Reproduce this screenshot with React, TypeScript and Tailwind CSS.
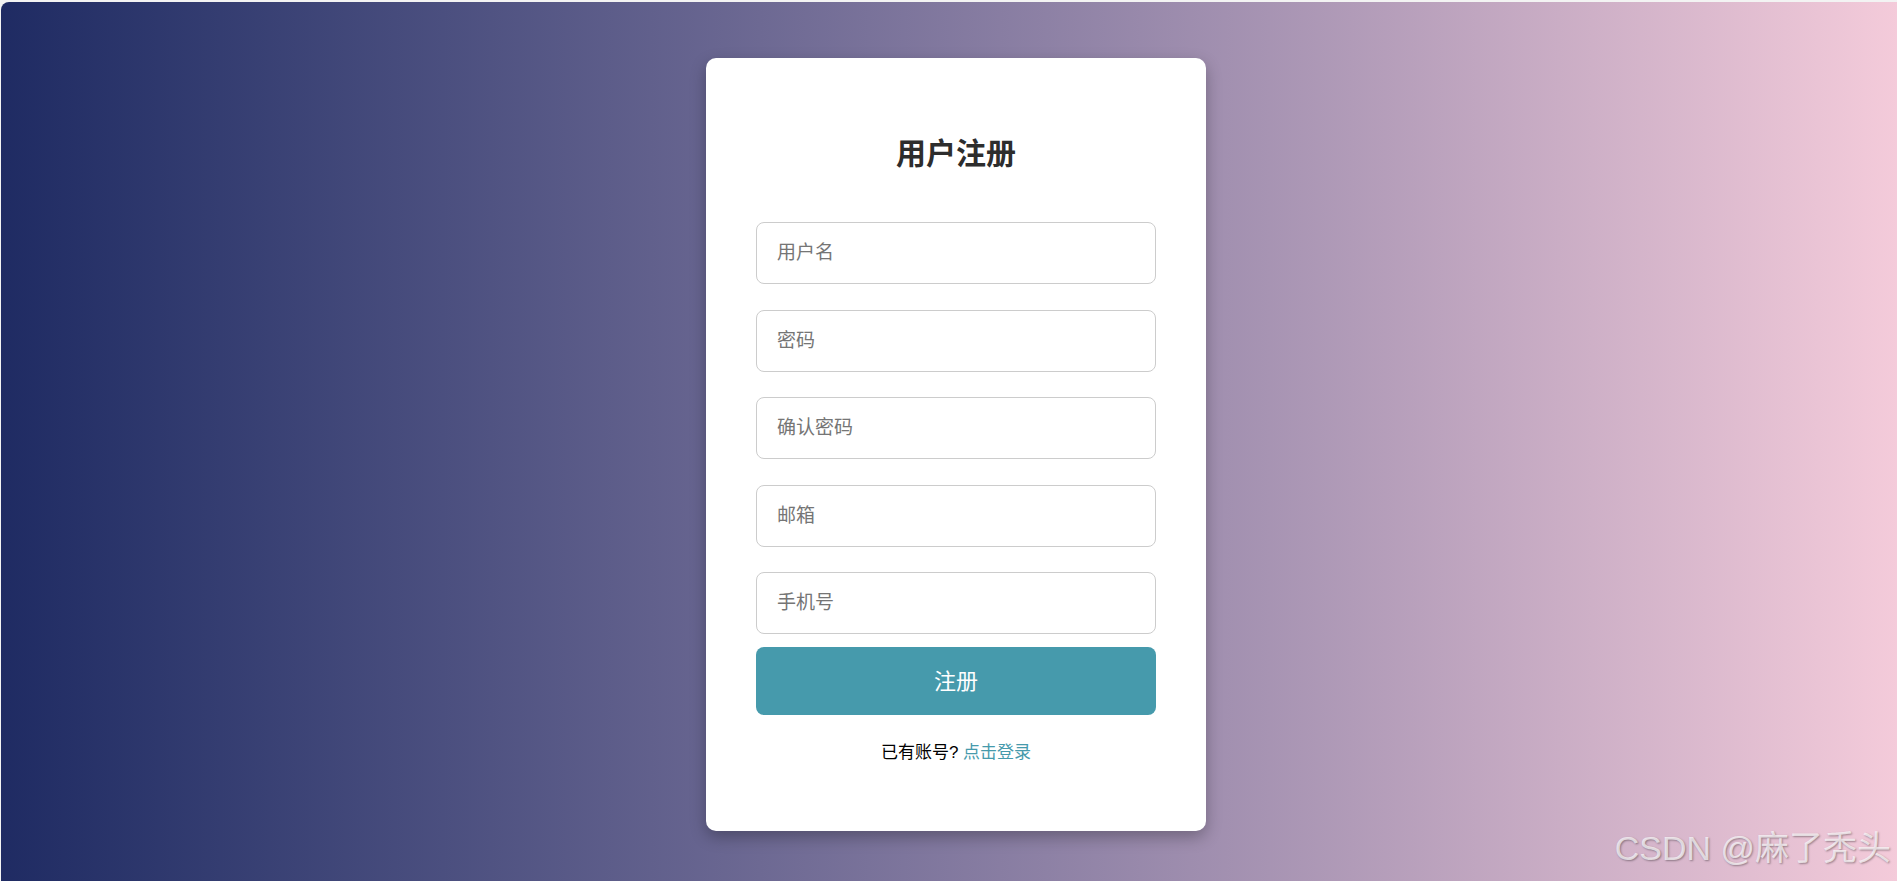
import { type FC } from "react";

const fields = ["用户名", "密码", "确认密码", "邮箱", "手机号"];

const App: FC = () => {
  return (
    <div
      className="h-[881px] w-full bg-[#f3f3f3] pt-[2px] pl-[1px] overflow-hidden"
      style={{ fontFamily: '"Liberation Sans", "Noto Sans CJK SC", sans-serif' }}
    >
      <div className="relative flex h-full w-full items-center justify-center rounded-tl-lg bg-gradient-to-r from-[#1f2b63] to-[#f4cbda]">
        <div className="ml-[14px] mt-[6px] flex h-[773px] w-[500px] flex-col rounded-[10px] bg-white px-[50px] pt-[76px] shadow-[0_6px_16px_rgba(0,0,0,0.28)]">
          <h1 className="text-center text-[30px] font-bold leading-[40px] text-[#2d2d2d]">用户注册</h1>

          <form className="mt-[48px] flex flex-col" onSubmit={(e) => e.preventDefault()}>
            <div className="flex flex-col gap-[25.5px]">
              {fields.map((f) => (
                <input
                  key={f}
                  type={f.includes("密码") ? "password" : "text"}
                  placeholder={f}
                  className="h-[62px] w-full rounded-lg border border-[#cccccc] px-[20px] text-[19px] text-[#333] outline-none placeholder:text-[#757575]"
                />
              ))}
            </div>
            <button
              type="submit"
              className="mt-[13px] h-[68px] w-full rounded-lg bg-[#469aac] text-[22px] text-white"
            >
              注册
            </button>
          </form>

          <p className="mt-[26px] text-center text-[17px] leading-[24px] text-black">
            已有账号? <a className="text-[#469aac]" href="#">点击登录</a>
          </p>
        </div>

        <span className="absolute bottom-[16px] right-[6px] text-[34px] leading-none text-white/70 [text-shadow:1px_1px_2px_rgba(0,0,0,0.35)]">
          CSDN @麻了秃头
        </span>
      </div>
    </div>
  );
};

export default App;
